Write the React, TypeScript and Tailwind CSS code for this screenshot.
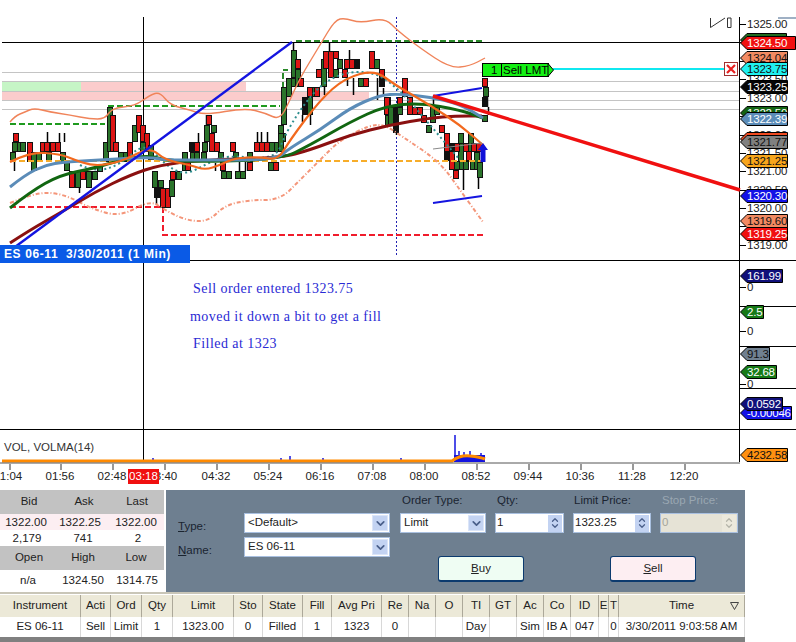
import React from "react";
import { ChevronDown, ChevronUp } from "lucide-react";

const R = "#dd1515", G = "#2b742b", K = "#111111";
type C = [number, number, number, string];
const candles: C[] = [
  [10,152,162,G],[12,142,152,G],[13,133,142,R],[17,142,152,G],[20,142,152,G],[27,142,162,R],[31,152,171,G],[36,152,162,G],[40,142,152,R],[44,142,152,R],[46,152,162,G],
  [50,142,152,R],[55,142,152,R],[60,152,162,G],[64,162,171,G],[69,171,188,R],[75,171,188,G],[80,171,180,R],[86,171,188,G],[92,171,180,G],[97,165,172,G],[103,142,162,G],
  [107,107,152,G],[110,115,152,R],[113,142,152,R],[118,152,162,G],[123,152,162,G],[127,142,162,R],[132,125,142,G],[136,115,133,R],[140,125,142,R],[144,133,152,R],[140,142,152,G],[148,145,160,G],
  [152,171,188,G],[154,188,198,K],[158,180,188,G],[160,188,208,R],[165,188,208,R],[169,180,197,G],[170,171,180,R],[176,171,180,G],[182,152,171,G],[185,162,171,R],
  [189,142,152,K],[190,152,162,G],[194,142,152,R],[194,152,162,G],[201,152,162,G],[202,142,152,G],[204,125,142,G],[206,115,125,R],[209,133,152,R],[211,125,133,G],[214,142,152,R],
  [218,152,162,G],[220,162,171,R],[221,171,179,G],[226,171,179,G],[230,142,152,R],[233,152,162,G],[235,171,179,G],[240,171,179,G],[247,162,171,R],[247,152,162,G],
  [254,142,152,R],[259,142,152,R],[264,142,152,R],[268,162,171,G],[269,142,152,G],[273,162,171,R],[274,142,152,G],[278,125,142,G],[280,133,142,G],[281,100,124,G],
  [278,133,152,G],[281,87,125,G],[286,78,97,G],[291,50,78,G],[291,78,87,G],[295,59,69,R],[295,69,87,G],[298,78,87,R],[302,97,115,K],[307,97,115,G],[307,87,97,R],[312,87,97,G],[314,87,97,R],[316,69,78,R],
  [321,59,87,G],[323,51,69,R],[328,51,78,R],[333,51,59,R],[333,69,78,G],[337,59,69,G],[342,69,78,R],[344,59,69,R],[349,59,69,R],[354,59,69,K],[358,78,87,G],[363,78,87,R],
  [369,51,69,R],[374,59,69,G],[379,69,78,R],[379,78,87,K],[385,97,115,R],[385,115,126,G],
  [384,97,115,R],[388,107,125,G],[393,107,133,K],[397,97,107,R],[397,107,115,G],[402,78,97,R],[407,97,115,R],[412,107,115,R],[417,107,115,R],[421,115,123,R],[426,125,133,G],
  [430,107,123,G],[434,107,115,G],[439,125,133,R],[444,133,152,R],[449,143,170,R],[453,170,179,R],[458,133,152,G],[458,143,170,G],[466,143,161,R],[470,161,170,G],[474,152,170,G],[477,162,178,G],
  [444,152,161,K],[449,143,152,K],[454,143,152,R],[463,143,152,R],[468,133,152,G],[471,143,152,R],[476,143,152,R],[454,161,170,G],[463,161,170,G],
  [482,78,87,R],[483,87,97,G],[482,97,107,K],[482,115,122,G],
];
const wicks: [number, number, number][] = [
  [12,152,171],[45,132,142],[57,133,142],[62,133,142],[77,188,193],[154,198,205],[157,188,198],[204,115,125],[196,133,142],[213,163,171],[237,162,171],[243,162,171],[255,132,142],[259,132,142],[265,132,142],
  [291,42,50],[327,42,51],[347,50,59],[300,115,122],[308,115,125],[322,87,95],[345,78,86],[351,78,95],[375,78,100],[381,88,96],[394,133,135],[431,96,107],[461,170,190],[476,178,189],[485,97,107],[486,107,115],
];
type P = [number, number];
const smooth = (p: P[]) => {
  let d = `M${p[0][0]} ${p[0][1]}`;
  for (let i = 1; i < p.length - 1; i++) {
    const mx = (p[i][0] + p[i + 1][0]) / 2, my = (p[i][1] + p[i + 1][1]) / 2;
    d += ` Q${p[i][0]} ${p[i][1]} ${mx} ${my}`;
  }
  const l = p[p.length - 1];
  return d + ` L${l[0]} ${l[1]}`;
};
const upper: P[] = [[10,122],[15,116],[25,112],[34,108],[50,112],[70,115],[90,119],[105,119],[112,108],[135,106],[150,95],[160,92],[170,105],[190,110],[205,115],[245,108],[265,113],[280,120],[290,100],[300,78],[320,45],[335,20],[345,18],[360,23],[385,18],[398,31],[420,48],[450,68],[470,66],[485,58]];
const lower: P[] = [[10,203],[30,195],[50,192],[70,197],[90,208],[120,217],[150,200],[165,210],[185,220],[208,222],[225,205],[250,200],[280,200],[300,180],[320,160],[340,140],[370,125],[385,125],[400,135],[440,162],[460,190],[483,222]];
const steel: P[] = [[10,187],[25,175],[45,165],[65,162],[100,160],[150,157],[165,160],[200,160],[275,160],[290,148],[320,130],[350,108],[380,95],[400,94],[430,97],[460,104],[483,118]];
const dgreen: P[] = [[10,208],[30,192],[60,175],[95,168],[120,160],[150,155],[170,162],[280,160],[310,145],[350,122],[385,106],[420,103],[460,110],[483,118]];
const dred: P[] = [[10,243],[30,230],[60,213],[95,192],[130,175],[160,165],[200,160],[280,158],[310,150],[350,135],[390,125],[430,118],[455,116],[482,116]];
const orange: P[] = [[10,162],[30,152],[60,154],[75,160],[90,165],[105,165],[125,160],[150,147],[165,160],[190,165],[205,170],[220,165],[235,158],[260,157],[278,160],[290,140],[320,100],[345,78],[375,70],[395,85],[430,105],[460,125],[483,145]];
const teal: P[] = [[80,165],[95,172],[120,165],[145,142],[165,165],[185,175],[205,165],[225,155],[275,160],[285,135],[300,110],[320,85],[345,72],[375,72],[400,90],[430,125],[460,160]];

const axis = ["1325.00","1324.50","1324.00","1323.50","1323.00","1322.50","1322.00","1321.50","1321.00","1320.50","1320.00","1319.50","1319.00"];
const axisY = [24,42,61,79,98,116,135,153,171,190,208,226,245];
const times: [string, number][] = [["1:04",11],["01:56",60],["02:48",112],["3:40",166],["04:32",216],["05:24",268],["06:16",320],["07:08",372],["08:00",424],["08:52",476],["09:44",528],["10:36",580],["11:28",632],["12:20",684]];
const tags: [string, number, number, string, string][] = [
  ["", 40, 47, "#1f6b1f", "#fff"],
  ["1324.50", 43, 56, "#f01010", "#fff"],
  ["1324.04", 58, 48, "#f28a62", "#111"],
  ["1323.75", 69, 48, "#1ff0f0", "#111"],
  ["1323.25", 87, 48, "#050505", "#fff"],
  ["1322.50", 113, 48, "#136313", "#fff"],
  ["1322.39", 119, 48, "#5b8cb8", "#fff"],
  ["", 139, 48, "#f04a20", "#fff"],
  ["1321.77", 142, 48, "#808080", "#111"],
  ["1321.25", 161, 48, "#f7a51c", "#111"],
  ["1320.30", 196, 48, "#1212e6", "#fff"],
  ["1319.60", 221, 48, "#f28a62", "#111"],
  ["1319.25", 234, 48, "#f01010", "#fff"],
  ["161.99", 276, 43, "#10107a", "#fff"],
  ["2.5", 312, 24, "#177a17", "#fff"],
  ["91.3", 354, 30, "#708090", "#111"],
  ["32.68", 372, 37, "#177a17", "#fff"],
  ["-0.00046", 413, 52, "#1212e6", "#fff"],
  ["0.0592", 404, 43, "#10107a", "#fff"],
  ["4232.58", 455, 48, "#ff9010", "#111"],
];

function Tag({ t, y, w, bg, fg }: { t: string; y: number; w: number; bg: string; fg: string }) {
  return (
    <div className="absolute left-[740px] h-[14px]" style={{ top: y - 7, width: w }}>
      <svg className="absolute inset-0" width={w} height={14}>
        <polygon points={`0.5,7 7,0.5 ${w - 0.5},0.5 ${w - 0.5},13.5 7,13.5`} fill={bg} stroke="#000" />
      </svg>
      <span className="absolute left-[7px] top-0 text-[11.5px] tracking-[-0.2px] leading-[14px]" style={{ color: fg }}>{t}</span>
    </div>
  );
}

function Drop({ w, label }: { w: string; label: string }) {
  return (
    <div className={`${w} h-[20px] bg-white border border-[#a9c0e0] flex items-center justify-between pl-[3px] text-[#222]`}>
      <span>{label}</span>
      <span className="w-[16px] h-[16px] mr-[1px] bg-[#c3d3f2] border border-[#dbe5f8] flex items-center justify-center">
        <ChevronDown size={13} strokeWidth={3.2} className="text-[#4a5f8a]" />
      </span>
    </div>
  );
}

function Spin({ w, label, off }: { w: string; label: string; off?: boolean }) {
  return (
    <div className={`${w} h-[20px] border border-[#a9c0e0] flex items-center justify-between pl-[1px] ${off ? "bg-[#e6e3d6] text-[#a5a59a]" : "bg-white text-[#222]"}`}>
      <span>{label}</span>
      <span className={`w-[14px] h-[17px] mr-[1px] flex flex-col items-center justify-center ${off ? "bg-[#ece9dc] text-[#b5b5aa]" : "bg-[#c3d3f2] text-[#4a5f8a]"}`}>
        <ChevronUp size={10} strokeWidth={3} className="-mb-[2px]" />
        <ChevronDown size={10} strokeWidth={3} className="-mt-[2px]" />
      </span>
    </div>
  );
}

const cols: [string, string, number][] = [
  ["Instrument","ES 06-11",81],["Acti","Sell",30],["Ord","Limit",31],["Qty","1",31],["Limit","1323.00",61],["Sto","0",29],["State","Filled",40],["Fill","1",29],["Avg Pri","1323",50],["Re","0",27],["Na","",27],["O","",27],["TI","Day",27],["GT","",27],["Ac","Sim",27],["Co","IB A",27],["ID","047",28],["E","",10],["T","0",10],["Time","3/30/2011 9:03:58 AM",126],
];

export default function App() {
  return (
    <div className="w-[796px] h-[642px] bg-white overflow-hidden flex flex-col text-[11.5px] text-[#222] font-['Liberation_Sans',Arial,sans-serif]">
      <div className="relative h-[490px] shrink-0">
        <svg className="absolute inset-0" width={796} height={490}>
          <rect x={2} y={81} width={79} height={10} fill="#c6f5c6" />
          <rect x={81} y={81} width={165} height={10} fill="#fbcccc" />
          <rect x={2} y={91} width={367} height={10} fill="#fbcccc" />
          {[72,81,91,100,109].map((y) => <line key={y} x1={2} x2={y === 72 ? 483 : 740} y1={y + 0.5} y2={y + 0.5} stroke="#c4c4c4" />)}
          <line x1={2} x2={740} y1={42.5} y2={42.5} stroke="#000" />
          <line x1={143.5} x2={143.5} y1={17} y2={462} stroke="#000" />
          <line x1={396.5} x2={396.5} y1={17} y2={257} stroke="#2020b0" strokeDasharray="2 2" />
          <line x1={190} x2={796} y1={260.5} y2={260.5} stroke="#000" />
          <line x1={0} x2={796} y1={429.5} y2={429.5} stroke="#000" />
          <line x1={739.5} x2={739.5} y1={17} y2={462} stroke="#000" />
          {[306,346,388].map((y) => <line key={y} x1={740} x2={796} y1={y + 0.5} y2={y + 0.5} stroke="#000" />)}
          {axisY.map((y) => <line key={y} x1={740} x2={746} y1={y + 0.5} y2={y + 0.5} stroke="#000" />)}
          {[287,331,384].map((y) => <line key={y} x1={740} x2={746} y1={y + 0.5} y2={y + 0.5} stroke="#000" />)}
          <path d="M10 124 H105 M108 124 V106 H280" stroke="#1f9a1f" strokeWidth={2} strokeDasharray="6 3" fill="none" />
          <path d="M283 106 V70 H288 M296 41 H485" stroke="#2a8a2a" strokeWidth={2} strokeDasharray="6 3" fill="none" />
          <path d="M10 207 H163 V235 H485" stroke="#f01c2c" strokeWidth={2} strokeDasharray="6 3" fill="none" />
          {wicks.map((w, i) => <line key={i} x1={w[0] + 2.5} x2={w[0] + 2.5} y1={w[1]} y2={w[2]} stroke="#000" strokeWidth={1.5} />)}
          {candles.map((c, i) => <rect key={i} x={c[0] + 0.5} y={c[1] + 0.5} width={5} height={Math.max(c[2] - c[1] - 1, 2)} fill={c[3]} stroke="#111" />)}
          <line x1={10} x2={485} y1={161} y2={161} stroke="#f7ad2a" strokeWidth={2} strokeDasharray="6 3" />
          <path d={smooth(upper)} fill="none" stroke="#f0845a" strokeWidth={1.4} />
          <path d={smooth(lower)} fill="none" stroke="#f4967a" strokeWidth={2} strokeDasharray="4 2 1 2" />
          <path d={smooth(teal)} fill="none" stroke="#2f8f8f" strokeWidth={2} strokeDasharray="2 3" />
          <path d={smooth(dred)} fill="none" stroke="#8a1010" strokeWidth={3} />
          <path d={smooth(dgreen)} fill="none" stroke="#116611" strokeWidth={3} />
          <path d={smooth(steel)} fill="none" stroke="#5b8cb8" strokeWidth={3} />
          <path d={smooth(orange)} fill="none" stroke="#f2691e" strokeWidth={2.2} />
          <line x1={15} y1={247} x2={292} y2={42} stroke="#1414e0" strokeWidth={2.4} />
          <line x1={433} y1={96} x2={482} y2={88} stroke="#1414e0" strokeWidth={2} />
          <line x1={433} y1={203} x2={482} y2={196} stroke="#1414e0" strokeWidth={2} />
          <line x1={433} y1={149} x2={482} y2={143} stroke="#8a8a8a" />
          <line x1={433} y1={96} x2={740} y2={190} stroke="#f01010" strokeWidth={3.4} />
          <polygon points="483,143 488,150 485.5,150 485.5,162 480.5,162 480.5,150 478,150" fill="#1010d8" />
          <line x1={553} x2={725} y1={69} y2={69} stroke="#10e8f0" strokeWidth={2} />
          <rect x={482.5} y={63.5} width={66} height={13} fill="#14f014" stroke="#000" />
          <polygon points="548,63.5 553.5,70 548,76.5" fill="#14f014" stroke="#000" />
          <line x1={501.5} x2={501.5} y1={64} y2={76} stroke="#000" />
          <rect x={724.5} y={62.5} width={13} height={13} fill="#fff" stroke="#a03030" />
          <path d="M727 65 L735 73 M735 65 L727 73" stroke="#e82020" strokeWidth={2.2} />
          <path d="M710.5 18 V27.5 L725 18 M727.5 18 V27.5 H731 V18 Z" fill="none" stroke="#333" />
          <line x1={778} x2={796} y1={18} y2={18} stroke="#7f96b0" strokeWidth={1.5} />
          <path d="M455 462 V435 M459 462 V451 M464 462 V452 M470 462 V451 M481 462 V453 M401 462 V458 M153 462 V458 M281 462 V458 M290 462 V456 M323 462 V458" stroke="#1414e0" strokeWidth={1.5} />
          <rect x={454} y={455} width={31} height={7} fill="#1414e0" />
          <path d="M2 461 H452 Q460 455 470 456 T485 459" fill="none" stroke="#ff8a00" strokeWidth={3} />
          <line x1={0} x2={740} y1={463} y2={463} stroke="#555" />
          {[10,61,113,165,217,269,321,373,425,477,529,581,633,685].map((x) => <line key={x} x1={x} x2={x} y1={464} y2={470} stroke="#333" />)}
        </svg>

        <div className="absolute left-[0px] top-[245px] w-[190px] h-[18px] bg-[#0a5ae6] text-white text-[12px] leading-[18px] font-bold pl-[4px] tracking-[0.6px] whitespace-pre">ES 06-11  3/30/2011 (1 Min)</div>
        <span className="absolute left-[491px] top-[63px] text-[11.5px] leading-[14px] text-black">1</span>
        <span className="absolute left-[503px] top-[63px] text-[11.5px] leading-[14px] text-black">Sell LMT</span>

        <p className="absolute left-[193px] top-[281px] text-[14px] tracking-[0.45px] leading-[16px] text-[#2a2ad4] font-['Liberation_Serif',serif]">Sell order entered 1323.75</p>
        <p className="absolute left-[190px] top-[309px] text-[14px] tracking-[0.45px] leading-[16px] text-[#2a2ad4] font-['Liberation_Serif',serif]">moved it down a bit to get a fill</p>
        <p className="absolute left-[193px] top-[336px] text-[14px] tracking-[0.45px] leading-[16px] text-[#2a2ad4] font-['Liberation_Serif',serif]">Filled at 1323</p>
        <span className="absolute left-[4px] top-[440px] text-[11.5px] leading-[14px] text-[#333]">VOL, VOLMA(14)</span>

        {axis.map((a, i) => <span key={a} className="absolute left-[747px] text-[11.5px] tracking-[-0.2px] leading-[14px] text-[#222]" style={{ top: axisY[i] - 7 }}>{a}</span>)}
        {[287,331,384].map((y) => <span key={y} className="absolute left-[747px] text-[11.5px] leading-[14px] text-[#222]" style={{ top: y - 7 }}>0</span>)}
        {tags.map((g, i) => <Tag key={i} t={g[0]} y={g[1]} w={g[2]} bg={g[3]} fg={g[4]} />)}

        {times.map(([t, x]) => <span key={t} className="absolute top-[469px] -translate-x-1/2 text-[11.5px] leading-[14px] text-[#222]" style={{ left: x }}>{t}</span>)}
        <span className="absolute left-[128px] top-[469px] w-[31px] h-[15px] bg-[#f01010] text-white text-[11.5px] leading-[15px] text-center">03:18</span>
      </div>

      <div className="flex gap-[2px] h-[102px] shrink-0 w-[745px]">
        <div className="w-[164px] shrink-0 flex flex-col">
          <div className="h-[24px] bg-[#c2c2c2] grid grid-cols-[58px_52px_1fr] items-center text-center"><span>Bid</span><span>Ask</span><span>Last</span></div>
          <div className="h-[16px] bg-[#fceef2] grid grid-cols-[52px_56px_1fr] items-center text-center"><span>1322.00</span><span>1322.25</span><span>1322.00</span></div>
          <div className="h-[16px] bg-white grid grid-cols-[54px_58px_1fr] items-center text-center"><span>2,179</span><span>741</span><span>2</span></div>
          <div className="h-[24px] bg-[#c2c2c2] grid grid-cols-[58px_50px_1fr] items-center text-center"><span>Open</span><span>High</span><span>Low</span></div>
          <div className="h-[22px] bg-white grid grid-cols-[56px_54px_1fr] items-center text-center"><span>n/a</span><span>1324.50</span><span>1314.75</span></div>
        </div>
        <div className="flex-1 bg-[#6e7f90] flex">
          <div className="w-[78px] pl-[12px] pt-[28px] flex flex-col gap-[8px] text-[#1a2430] shrink-0">
            <span className="leading-[16px]"><span className="underline">T</span>ype:</span>
            <span className="leading-[16px]"><span className="underline">N</span>ame:</span>
          </div>
          <div className="pt-[23px] flex flex-col gap-[4px] w-[146px] shrink-0">
            <Drop w="w-[146px]" label="<Default>" />
            <Drop w="w-[146px]" label="ES 06-11" />
          </div>
          <div className="flex-1 pl-[10px] flex flex-col">
            <div className="flex h-[23px] pt-[2px] gap-[9px] leading-[16px]">
              <div className="w-[86px] pl-[2px] text-[#1a2430]">Order Type:</div>
              <div className="w-[69px] pl-[2px] text-[#1a2430]">Qty:</div>
              <div className="w-[78px] pl-[1px] text-[#1a2430]">Limit Price:</div>
              <div className="w-[78px] pl-[2px] text-[#9aa7b2]">Stop Price:</div>
            </div>
            <div className="flex gap-[9px]">
              <Drop w="w-[86px]" label="Limit" />
              <Spin w="w-[69px]" label="1" />
              <Spin w="w-[78px]" label="1323.25" />
              <Spin w="w-[78px]" label="0" off />
            </div>
            <div className="flex pl-[38px] gap-[86px] mt-[23px]">
              <button className="w-[86px] h-[26px] rounded-[3px] bg-[#effdf3] border border-[#0b3a6e] border-b-2 text-[#222]"><span className="underline">B</span>uy</button>
              <button className="w-[86px] h-[26px] rounded-[3px] bg-[#fdeef2] border border-[#0b3a6e] border-b-2 text-[#222]"><span className="underline">S</span>ell</button>
            </div>
          </div>
        </div>
      </div>

      <div className="w-[745px] border-t-2 border-[#c9c6b8] pt-[1px]">
        <div className="flex h-[22px] bg-[#ece9d8]">
          {cols.map(([h, , w]) => (
            <div key={h} className="relative shrink-0 border-r border-[#aca899] flex items-center justify-center overflow-hidden" style={{ width: w }}>
              {h}
              {h === "Time" && (
                <svg className="absolute right-[5px] top-[7px]" width={9} height={8}><polygon points="0.5,0.5 8.5,0.5 4.5,7.5" fill="none" stroke="#444" /></svg>
              )}
            </div>
          ))}
        </div>
        <div className="flex h-[20px] bg-white">
          {cols.map(([h, v, w]) => (
            <div key={h} className="shrink-0 border-r border-[#d8d8d8] flex items-center justify-center overflow-hidden whitespace-nowrap" style={{ width: w }}>{v}</div>
          ))}
        </div>
        <div className="h-[8px] bg-[#808080]" />
      </div>
    </div>
  );
}
